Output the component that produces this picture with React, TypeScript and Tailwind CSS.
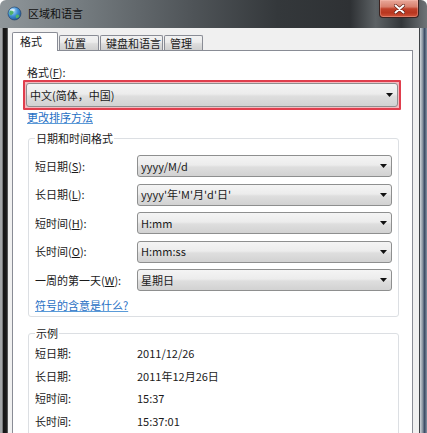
import React from "react";

const Arrow = () => (
  <svg width="7" height="4" viewBox="0 0 7 4" className="shrink-0">
    <polygon points="0,0 7,0 3.5,4" fill="#111" />
  </svg>
);

const Combo = ({ value, className = "" }: { value: string; className?: string }) => (
  <div
    className={
      "flex items-center justify-between pl-[3px] pr-[4px] border border-[#8e8f8f] rounded-[3px] bg-[linear-gradient(to_bottom,#f4f4f4_0%,#ececec_45%,#dedede_55%,#d2d2d2_100%)] " +
      className
    }
  >
    <span className="whitespace-pre">{value}</span>
    <Arrow />
  </div>
);

const Key = ({ label, k }: { label: string; k: string }) => (
  <span>
    {label}(<span className="underline">{k}</span>):
  </span>
);

const rows: { label: string; k: string; value: string }[] = [
  { label: "短日期", k: "S", value: "yyyy/M/d" },
  { label: "长日期", k: "L", value: "yyyy'年'M'月'd'日'" },
  { label: "短时间", k: "H", value: "H:mm" },
  { label: "长时间", k: "O", value: "H:mm:ss" },
  { label: "一周的第一天", k: "W", value: "星期日" },
];

const examples: [string, string][] = [
  ["短日期:", "2011/12/26"],
  ["长日期:", "2011年12月26日"],
  ["短时间:", "15:37"],
  ["长时间:", "15:37:01"],
];

export default function App() {
  return (
    <div className="w-[427px] h-[433px] overflow-hidden flex flex-col bg-white font-['Noto_Sans_CJK_SC',sans-serif] text-[11px] text-[#1b1b1b] leading-none">
      {/* Title bar */}
      <div className="h-[28px] shrink-0 flex items-start rounded-t-[6px] bg-[linear-gradient(to_right,#8f969a_0%,#737a7e_20%,#4f5458_45%,#34383b_65%,#2e3134_82%,#5d6265_88%,#33373a_94%,#6f7478_100%)]">
        <div className="flex items-center gap-[6px] pl-[7px] pt-[5px] h-[21px]">
          <svg width="15" height="15" viewBox="0 0 15 15">
            <defs>
              <radialGradient id="g" cx="0.35" cy="0.3" r="0.8">
                <stop offset="0" stopColor="#bfe8ff" />
                <stop offset="0.5" stopColor="#3f8fd6" />
                <stop offset="1" stopColor="#1b4f8c" />
              </radialGradient>
            </defs>
            <circle cx="7.5" cy="7.5" r="6.5" fill="url(#g)" stroke="#1d3d63" strokeWidth="0.6" />
            <path d="M3 5 C4.5 3.5 6 4.5 6.5 6 C7 7.5 5.5 8 4.5 9 C3.8 9.8 2.5 8 2.3 7 Z" fill="#4fb36a" />
            <path d="M9 9 C10 8 12 8.5 12.5 10 C11.8 11.6 10 12.5 9 12 C8.6 11 8.5 10 9 9 Z" fill="#4fb36a" />
            <ellipse cx="5.5" cy="4" rx="2.5" ry="1.2" fill="#ffffff" opacity="0.5" />
          </svg>
          <span className="text-[11px] text-[#111]">区域和语言</span>
        </div>
        <div className="ml-auto mr-[8px] w-[40px] h-[18px] rounded-b-[4px] border border-t-0 border-[#3b2320] flex items-center justify-center bg-[linear-gradient(to_bottom,#e9a89a_0%,#d8806d_40%,#c0412a_52%,#b8361f_75%,#d0553b_100%)] shadow-[inset_0_0_0_1px_rgba(255,200,190,0.35)]">
          <svg width="11" height="10" viewBox="0 0 11 10">
            <path d="M1.5 1.5 L9.5 8.5 M9.5 1.5 L1.5 8.5" stroke="#5a1a10" strokeWidth="3.2" strokeLinecap="round" />
            <path d="M1.5 1.5 L9.5 8.5 M9.5 1.5 L1.5 8.5" stroke="#ffffff" strokeWidth="2" strokeLinecap="round" />
          </svg>
        </div>
      </div>

      {/* Body */}
      <div className="flex flex-1 min-h-0">
        <div className="w-[8px] shrink-0 bg-[linear-gradient(to_right,#a3a6a8_0%,#a3a6a8_28%,#161616_38%,#1b1b1b_80%,#6d6f70_100%)]" />
        <div className="flex-1 min-w-0 bg-[#f0f0f0] border-r border-[#3e4246] pl-[4px] pr-[6px] pt-[4px] flex flex-col">
          {/* Tabs */}
          <div className="flex items-end gap-[1px] h-[18px] shrink-0">
            <div className="relative z-10 w-[46px] h-[19px] mb-[-1px] bg-white border border-b-0 border-[#898c95] rounded-t-[2px] pl-[7px] pt-[3px]">
              格式
            </div>
            <div className="w-[40px] h-[15px] border border-b-0 border-[#898c95] rounded-t-[2px] pl-[4px] pt-[2px] bg-[linear-gradient(to_bottom,#f2f2f2_0%,#ebebeb_45%,#dddddd_55%,#cfcfcf_100%)]">
              位置
            </div>
            <div className="w-[63px] h-[15px] border border-b-0 border-[#898c95] rounded-t-[2px] pl-[5px] pt-[2px] bg-[linear-gradient(to_bottom,#f2f2f2_0%,#ebebeb_45%,#dddddd_55%,#cfcfcf_100%)]">
              键盘和语言
            </div>
            <div className="w-[39px] h-[15px] border border-b-0 border-[#898c95] rounded-t-[2px] pl-[5px] pt-[2px] bg-[linear-gradient(to_bottom,#f2f2f2_0%,#ebebeb_45%,#dddddd_55%,#cfcfcf_100%)]">
              管理
            </div>
          </div>

          {/* Panel */}
          <div className="flex-1 bg-white border border-[#898c95] pt-[13px] flex flex-col items-start">
            <div className="h-[16px] ml-[14px] flex items-center">
              <Key label="格式" k="F" />
            </div>
            <div className="ml-[10px] w-[378px] h-[30px] border-2 border-[#e03e4d] p-[1px] bg-[#f3b9bf] rounded-[1px]">
              <Combo value="中文(简体，中国)" className="h-full pl-[3px] pr-[2px]" />
            </div>
            <div className="h-[14px] ml-[14px] flex items-center text-[#1f6fc4] underline decoration-[#5b9bd8]">
              更改排序方法
            </div>

            <fieldset className="mt-[7px] ml-[15px] w-[371px] border border-[#dcdfe3] rounded-[3px] px-[6px] pb-[4px]">
              <legend className="h-[14px] px-[1px] flex items-center">日期和时间格式</legend>
              <div className="pt-[10px] flex flex-col gap-[6.5px]">
                {rows.map((r) => (
                  <div key={r.k} className="flex items-center h-[22px]">
                    <div className="w-[102px] shrink-0">
                      <Key label={r.label} k={r.k} />
                    </div>
                    <Combo value={r.value} className="flex-1 h-[22px]" />
                  </div>
                ))}
              </div>
              <div className="mt-[7px] h-[14px] flex items-center text-[#1f6fc4] underline decoration-[#5b9bd8]">
                符号的含意是什么?
              </div>
            </fieldset>

            <fieldset className="mt-[9px] ml-[15px] w-[371px] border border-[#dcdfe3] rounded-[3px] px-[6px] pb-[4px]">
              <legend className="h-[14px] px-[1px] flex items-center">示例</legend>
              <div className="pt-[2px] flex flex-col">
                {examples.map(([l, v]) => (
                  <div key={l} className="flex items-center h-[22.7px]">
                    <div className="w-[102px] shrink-0">{l}</div>
                    <div>{v}</div>
                  </div>
                ))}
              </div>
            </fieldset>
          </div>
        </div>
        <div className="w-[7px] shrink-0 bg-[linear-gradient(to_right,#cfd4d9_0%,#8e98a4_35%,#3d4d66_65%,#8693a3_100%)]" />
      </div>
    </div>
  );
}
